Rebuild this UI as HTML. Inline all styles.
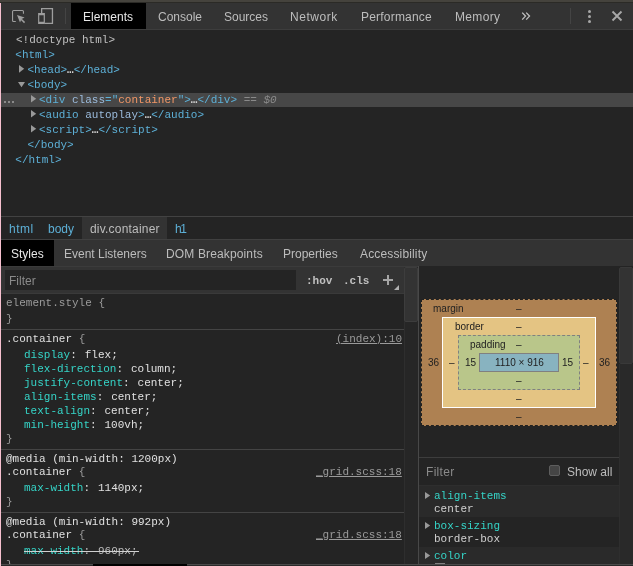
<!DOCTYPE html>
<html><head><meta charset="utf-8">
<style>
*{box-sizing:border-box;margin:0;padding:0}
html,body{width:633px;height:566px;overflow:hidden;background:#242424}
body{position:relative;font-family:"Liberation Sans",sans-serif;font-size:12px;color:#bdbdbd}
.a{position:absolute}
.t{position:absolute;white-space:pre;line-height:14px}
.m{font-family:"Liberation Mono",monospace;font-size:11px}
.tag{color:#5db0d7}
.an{color:#9bbbdc}
.av{color:#f29766}
.pn{color:#35d4c7}
.pv{color:#e0e0e0}
.br{color:#9a9a9a}
.g{display:inline-block;width:1.3px}
</style></head><body>
<div id="w" style="position:absolute;left:0;top:0;width:633px;height:566px;will-change:transform">
<!-- top dark bar -->
<div class="a" style="left:0;top:0;width:633px;height:2px;background:#45433d"></div>
<div class="a" style="left:0;top:2px;width:633px;height:1px;background:#2b2a26"></div>
<!-- toolbar -->
<div class="a" style="left:0;top:3px;width:633px;height:26px;background:#333"></div>
<div class="a" style="left:0;top:29px;width:633px;height:1px;background:#3d3d3d"></div>
<!-- inspect icon -->
<svg class="a" style="left:9px;top:7px" width="20" height="18" viewBox="0 0 20 18">
  <path d="M6.8 14.45H4.55Q3.55 14.45 3.55 13.45V4.55Q3.55 3.55 4.55 3.55H13.45Q14.45 3.55 14.45 4.55V6.8" fill="none" stroke="#9e9e9e" stroke-width="1.1"/>
  <path d="M8 8L15.6 10.6L12.6 12.1L11 15.6Z" fill="#9e9e9e"/>
  <path d="M12.2 12.2L15.6 15.6" stroke="#9e9e9e" stroke-width="1.5"/>
</svg>
<!-- device icon -->
<svg class="a" style="left:34px;top:5px" width="24" height="22" viewBox="0 0 24 22">
  <path d="M7.65 8V3.55H18.45V18.45H10.9" fill="none" stroke="#9e9e9e" stroke-width="1.3"/>
  <path fill-rule="evenodd" d="M4.1 8H10.9V19.1H4.1Z M5.25 10.3V16.7H9.7V10.3Z" fill="#9e9e9e"/>
</svg>
<div class="a" style="left:65px;top:8px;width:1px;height:16px;background:#444"></div>
<div class="a" style="left:71px;top:3px;width:75px;height:26px;background:#000"></div>
<div class="t" style="left:83px;top:10px;color:#e8e8e8">Elements</div>
<div class="t" style="left:158px;top:10px">Console</div>
<div class="t" style="left:224px;top:10px">Sources</div>
<div class="t" style="left:290px;top:10px;letter-spacing:0.55px">Network</div>
<div class="t" style="left:361px;top:10px;letter-spacing:0.2px">Performance</div>
<div class="t" style="left:455px;top:10px;letter-spacing:0.35px">Memory</div>
<svg class="a" style="left:516px;top:7px" width="20" height="18" viewBox="0 0 20 18"><path d="M6.2 5.6L9.5 9.1L6.2 12.6M10.2 5.6L13.5 9.1L10.2 12.6" fill="none" stroke="#c0c0c0" stroke-width="1.3"/></svg>
<div class="a" style="left:570px;top:8px;width:1px;height:16px;background:#444"></div>
<div class="a" style="left:587.5px;top:10px;width:3px;height:3px;border-radius:50%;background:#a8a8a8"></div>
<div class="a" style="left:587.5px;top:15px;width:3px;height:3px;border-radius:50%;background:#a8a8a8"></div>
<div class="a" style="left:587.5px;top:20px;width:3px;height:3px;border-radius:50%;background:#a8a8a8"></div>
<svg class="a" style="left:611px;top:10px" width="12" height="12" viewBox="0 0 12 12">
  <path d="M1.5 1.5L10.5 10.5M10.5 1.5L1.5 10.5" stroke="#a8a8a8" stroke-width="1.9"/>
</svg>

<!-- DOM tree -->
<div class="t m" style="left:16px;top:33px;color:#c0c0c0">&lt;!doctype html&gt;</div>
<div class="t m tag" style="left:15.3px;top:48px">&lt;html&gt;</div>
<svg class="a" style="left:19px;top:65px" width="6" height="8"><path d="M0 0L5.2 3.85L0 7.7Z" fill="#999"/></svg>
<div class="t m" style="left:27.5px;top:63px"><span class="tag">&lt;head&gt;</span><span style="color:#d0d0d0;font-weight:bold">…</span><span class="tag">&lt;/head&gt;</span></div>
<svg class="a" style="left:18px;top:82px" width="8" height="6"><path d="M0 0L7 0L3.5 5.2Z" fill="#999"/></svg>
<div class="t m tag" style="left:27.5px;top:78px">&lt;body&gt;</div>
<div class="a" style="left:1px;top:93px;width:632px;height:14px;background:#474747"></div>
<div class="a" style="left:4.4px;top:100.6px;width:2px;height:2px;border-radius:1px;background:#a0a0a0"></div><div class="a" style="left:8.35px;top:100.6px;width:2px;height:2px;border-radius:1px;background:#a0a0a0"></div><div class="a" style="left:12.3px;top:100.6px;width:2px;height:2px;border-radius:1px;background:#a0a0a0"></div>
<svg class="a" style="left:31px;top:95px" width="6" height="8"><path d="M0 0L5.2 3.75L0 7.5Z" fill="#999"/></svg>
<div class="t m" style="left:39px;top:93px"><span class="tag">&lt;div</span> <span class="an">class</span><span class="tag">="</span><span class="av">container</span><span class="tag">"&gt;</span><span style="color:#d0d0d0;font-weight:bold">…</span><span class="tag">&lt;/div&gt;</span> <span style="color:#8a8a8a">== <i>$0</i></span></div>
<svg class="a" style="left:31px;top:110px" width="6" height="8"><path d="M0 0L5.2 3.75L0 7.5Z" fill="#999"/></svg>
<div class="t m" style="left:39px;top:108px"><span class="tag">&lt;audio</span> <span class="an">autoplay</span><span class="tag">&gt;</span><span style="color:#d0d0d0;font-weight:bold">…</span><span class="tag">&lt;/audio&gt;</span></div>
<svg class="a" style="left:31px;top:125px" width="6" height="8"><path d="M0 0L5.2 3.75L0 7.5Z" fill="#999"/></svg>
<div class="t m" style="left:39px;top:123px"><span class="tag">&lt;script&gt;</span><span style="color:#d0d0d0;font-weight:bold">…</span><span class="tag">&lt;/script&gt;</span></div>
<div class="t m tag" style="left:27.5px;top:138px">&lt;/body&gt;</div>
<div class="t m tag" style="left:15.3px;top:153px">&lt;/html&gt;</div>

<!-- breadcrumbs -->
<div class="a" style="left:0;top:216px;width:633px;height:1px;background:#424242"></div>
<div class="a" style="left:82px;top:217px;width:85px;height:22px;background:#333"></div>
<div class="t tag" style="left:9px;top:222px;letter-spacing:0.5px">html</div>
<div class="t tag" style="left:48px;top:222px">body</div>
<div class="t" style="left:90px;top:222px;color:#bdbdbd;letter-spacing:0.2px">div.container</div>
<div class="t tag" style="left:175px;top:222px;letter-spacing:-1.5px">h1</div>

<!-- sidebar tabs -->
<div class="a" style="left:0;top:239px;width:633px;height:27px;background:#333"></div>
<div class="a" style="left:0;top:239px;width:633px;height:1px;background:#404040"></div>
<div class="a" style="left:1px;top:240px;width:53px;height:26px;background:#000"></div>
<div class="t" style="left:11px;top:247px;color:#e8e8e8">Styles</div>
<div class="t" style="left:64px;top:247px">Event Listeners</div>
<div class="t" style="left:166px;top:247px;letter-spacing:0.14px">DOM Breakpoints</div>
<div class="t" style="left:283px;top:247px">Properties</div>
<div class="t" style="left:360px;top:247px;letter-spacing:0.15px">Accessibility</div>

<!-- styles toolbar -->
<div class="a" style="left:1px;top:266px;width:403px;height:27px;background:#333"></div>
<div class="a" style="left:1px;top:266px;width:403px;height:1px;background:#3b3b3b"></div>
<div class="a" style="left:5px;top:270px;width:291px;height:20px;background:#242424"></div>
<div class="t" style="left:9px;top:274px;color:#8a8a8a">Filter</div>
<div class="t m" style="left:306px;top:274px;font-weight:bold;color:#c0c0c0">:hov</div>
<div class="t m" style="left:343px;top:274px;font-weight:bold;color:#c0c0c0">.cls</div>
<svg class="a" style="left:383px;top:275px" width="10" height="10"><path d="M5 0V10M0 5H10" stroke="#a5a5a5" stroke-width="2"/></svg>
<svg class="a" style="left:394px;top:285px" width="6" height="5"><path d="M5 0V5H0Z" fill="#b0b0b0"/></svg>
<div class="a" style="left:1px;top:293px;width:403px;height:1px;background:#3a3a3a"></div>

<!-- styles scrollbar -->
<div class="a" style="left:404px;top:266px;width:14px;height:300px;background:#262626;border-left:1px solid #2e2e2e"></div>
<div class="a" style="left:1px;top:266px;width:417px;height:1px;background:#3b3b3b"></div>
<div class="a" style="left:404px;top:267px;width:14px;height:55px;background:#333;border:1px solid #3d3d3d;border-radius:2px"></div>

<!-- styles content -->
<div class="t m" style="left:6px;top:296px;color:#9a9a9a">element.style {</div>
<div class="t m br" style="left:6px;top:312px">}</div>
<div class="a" style="left:1px;top:329px;width:403px;height:1px;background:#444"></div>
<div class="t m" style="left:6px;top:332px;color:#e0e0e0">.container <span class="br">{</span></div>
<div class="t m" style="left:336px;top:332px;color:#9a9a9a;text-decoration:underline">(index):10</div>
<div class="t m" style="left:24px;top:348px"><span class="pn">display</span><span class="pv">:<b class="g"></b> flex;</span></div>
<div class="t m" style="left:24px;top:362px"><span class="pn">flex-direction</span><span class="pv">:<b class="g"></b> column;</span></div>
<div class="t m" style="left:24px;top:376px"><span class="pn">justify-content</span><span class="pv">:<b class="g"></b> center;</span></div>
<div class="t m" style="left:24px;top:390px"><span class="pn">align-items</span><span class="pv">:<b class="g"></b> center;</span></div>
<div class="t m" style="left:24px;top:404px"><span class="pn">text-align</span><span class="pv">:<b class="g"></b> center;</span></div>
<div class="t m" style="left:24px;top:418px"><span class="pn">min-height</span><span class="pv">:<b class="g"></b> 100vh;</span></div>
<div class="t m br" style="left:6px;top:432px">}</div>
<div class="a" style="left:1px;top:449px;width:403px;height:1px;background:#444"></div>
<div class="t m" style="left:6px;top:452px;color:#e0e0e0">@media (min-width: 1200px)</div>
<div class="t m" style="left:6px;top:465px;color:#e0e0e0">.container <span class="br">{</span></div>
<div class="t m" style="left:316px;top:465px;color:#9a9a9a;text-decoration:underline">_grid.scss:18</div>
<div class="t m" style="left:24px;top:481px"><span class="pn">max-width</span><span class="pv">:<b class="g"></b> 1140px;</span></div>
<div class="t m br" style="left:6px;top:495px">}</div>
<div class="a" style="left:1px;top:512px;width:403px;height:1px;background:#444"></div>
<div class="t m" style="left:6px;top:515px;color:#e0e0e0">@media (min-width: 992px)</div>
<div class="t m" style="left:6px;top:528px;color:#e0e0e0">.container <span class="br">{</span></div>
<div class="t m" style="left:316px;top:528px;color:#9a9a9a;text-decoration:underline">_grid.scss:18</div>
<div class="t m" style="left:24px;top:544px;color:#ccc"><span class="pn">max-width</span><span class="pv" style="color:#bbb">:<b class="g"></b> 960px;</span></div>
<div class="a" style="left:23.5px;top:551px;width:115px;height:1px;background:#d0d0d0"></div>
<div class="t m br" style="left:6px;top:558px">}</div>

<!-- right pane -->
<div class="a" style="left:418px;top:266px;width:1px;height:300px;background:#484848"></div>
<div class="a" style="left:619px;top:267px;width:14px;height:97px;background:#333;border:1px solid #393939;border-radius:2px"></div>

<!-- box model -->
<div class="a" style="left:421px;top:299px;width:196px;height:127px;background:#ae8152;border:1px dashed #202020"></div>
<div class="a" style="left:442px;top:317px;width:154px;height:91px;background:#e4c483;border:1px solid #fff"></div>
<div class="a" style="left:458px;top:335px;width:122px;height:55px;background:#b9c68a;border:1px dashed #808080"></div>
<div class="a" style="left:479px;top:353px;width:80px;height:19px;background:#88b3c0;border:1px solid #808080"></div>
<div style="position:absolute;left:0;top:0;font-size:10px;color:#222">
<div class="t" style="left:433px;top:302px">margin</div>
<div class="t" style="left:516px;top:302px">–</div>
<div class="t" style="left:455px;top:320px">border</div>
<div class="t" style="left:516px;top:320px">–</div>
<div class="t" style="left:470px;top:338px">padding</div>
<div class="t" style="left:516px;top:338px">–</div>
<div class="t" style="left:428px;top:356px">36</div>
<div class="t" style="left:449px;top:356px">–</div>
<div class="t" style="left:465px;top:356px">15</div>
<div class="t" style="left:495px;top:356px">1110 × 916</div>
<div class="t" style="left:562px;top:356px">15</div>
<div class="t" style="left:583px;top:356px">–</div>
<div class="t" style="left:599px;top:356px">36</div>
<div class="t" style="left:516px;top:374px">–</div>
<div class="t" style="left:516px;top:392px">–</div>
<div class="t" style="left:516px;top:410px">–</div>
</div>

<!-- computed filter -->
<div class="a" style="left:419px;top:457px;width:200px;height:1px;background:#3d3d3d"></div>
<div class="t" style="left:426px;top:465px;color:#8a8a8a;letter-spacing:0.3px">Filter</div>
<div class="a" style="left:549px;top:465px;width:11px;height:11px;border:1px solid #5e5e5e;border-radius:2px;background:#454545"></div>
<div class="t" style="left:567px;top:465px">Show all</div>
<div class="a" style="left:419px;top:485px;width:200px;height:1px;background:#2e2e2e"></div>
<div class="a" style="left:419px;top:486px;width:200px;height:31px;background:#2a2a2a"></div>
<div class="a" style="left:419px;top:547px;width:200px;height:18px;background:#2a2a2a"></div>
<div class="a" style="left:619px;top:364px;width:14px;height:201px;background:#292929;border-left:1px solid #2e2e2e"></div>
<svg class="a" style="left:425px;top:491.5px" width="6" height="8"><path d="M0 0L5.2 3.5L0 7Z" fill="#999"/></svg>
<div class="t m pn" style="left:434px;top:489px">align-items</div>
<div class="t m" style="left:434px;top:502px;color:#d0d0d0">center</div>
<svg class="a" style="left:425px;top:521.5px" width="6" height="8"><path d="M0 0L5.2 3.5L0 7Z" fill="#999"/></svg>
<div class="t m pn" style="left:434px;top:519px">box-sizing</div>
<div class="t m" style="left:434px;top:532px;color:#d0d0d0">border-box</div>
<svg class="a" style="left:425px;top:551.5px" width="6" height="8"><path d="M0 0L5.2 3.5L0 7Z" fill="#999"/></svg>
<div class="t m pn" style="left:434px;top:549px">color</div>
<div class="a" style="left:435px;top:563px;width:10px;height:1.5px;background:#808080"></div>

<!-- bottom line -->
<div class="a" style="left:1px;top:564px;width:632px;height:2px;background:#2a2a2a"></div>
<div class="a" style="left:1px;top:564px;width:632px;height:1px;background:#4a4a4a"></div>
<div class="a" style="left:93px;top:564px;width:94px;height:2px;background:#000"></div>
<!-- left pink border -->
<div class="a" style="left:0;top:3px;width:1px;height:563px;background:#f6c0cf"></div>
</div>
</body></html>
